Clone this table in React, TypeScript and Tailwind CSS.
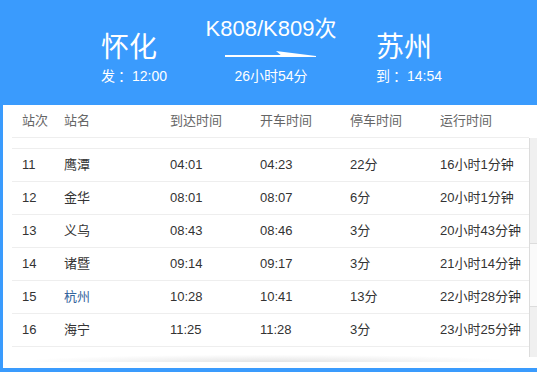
const stops = [
  { no: '11', name: '鹰潭', arrive: '04:01', depart: '04:23', stay: '22分', run: '16小时1分钟' },
  { no: '12', name: '金华', arrive: '08:01', depart: '08:07', stay: '6分', run: '20小时1分钟' },
  { no: '13', name: '义乌', arrive: '08:43', depart: '08:46', stay: '3分', run: '20小时43分钟' },
  { no: '14', name: '诸暨', arrive: '09:14', depart: '09:17', stay: '3分', run: '21小时14分钟' },
  { no: '15', name: '杭州', arrive: '10:28', depart: '10:41', stay: '13分', run: '22小时28分钟', current: true },
  { no: '16', name: '海宁', arrive: '11:25', depart: '11:28', stay: '3分', run: '23小时25分钟' },
];

const cols = 'grid grid-cols-[42px_106px_90px_90px_90px_1fr] pl-[10px] items-center';

function Arrow() {
  return (
    <svg width="92" height="8" viewBox="0 0 92 8" className="block">
      <rect x="0" y="5" width="60" height="2" fill="#fff" />
      <polygon points="51,1 91,6 91,7 58,7" fill="#fff" />
    </svg>
  );
}

export default function App() {
  return (
    <div
      className="w-full h-[372px] border-l-[3px] border-b-4 border-[#3a9bfd] bg-white flex flex-col"
      style={{ fontFamily: '"Liberation Sans", "Noto Sans CJK SC", sans-serif' }}
    >
      {/* Header */}
      <div className="h-[105px] shrink-0 bg-[#3a9bfd] text-white flex pl-[98px]">
        <div className="w-[100px] pt-[34px]">
          <div className="text-[28px] leading-[28px] h-[28px]">怀化</div>
          <div className="mt-[7px] text-[14px] leading-[14px] whitespace-nowrap">
            发<span className="ml-[3px]">：</span>12:00
          </div>
        </div>
        <div className="w-[140px] pt-[18px] flex flex-col items-center">
          <div className="text-[22px] leading-[22px] h-[22px] whitespace-nowrap">K808/K809次</div>
          <div className="mt-[10px]">
            <Arrow />
          </div>
          <div className="mt-[11px] text-[14px] leading-[14px]">26小时54分</div>
        </div>
        <div className="ml-[35px] pt-[34px]">
          <div className="text-[28px] leading-[28px] h-[28px]">苏州</div>
          <div className="mt-[7px] text-[14px] leading-[14px] whitespace-nowrap">
            到<span className="ml-[3px]">：</span>14:54
          </div>
        </div>
      </div>

      {/* Table header */}
      <div className="ml-[9px] mr-[8px] h-[33px] shrink-0 border-b border-[#eeeeee] text-[13px] text-[#666]">
        <div className={`${cols} h-full`}>
          <div>站次</div>
          <div>站名</div>
          <div>到达时间</div>
          <div>开车时间</div>
          <div>停车时间</div>
          <div>运行时间</div>
        </div>
      </div>

      {/* Body */}
      <div className="flex h-[219px] shrink-0">
        <div className="flex-1 ml-[9px] pt-[10px]">
          <div className="border-t border-[#eeeeee]">
            {stops.map((s) => (
              <div
                key={s.no}
                className={`${cols} h-[33px] border-b border-[#eeeeee] text-[13px] text-[#333]`}
              >
                <div>{s.no}</div>
                <div className={s.current ? 'text-[#33649c]' : ''}>{s.name}</div>
                <div>{s.arrive}</div>
                <div>{s.depart}</div>
                <div>{s.stay}</div>
                <div className="whitespace-nowrap">{s.run}</div>
              </div>
            ))}
          </div>
        </div>
        {/* scrollbar */}
        <div className="w-[8px] border-l border-[#dcdcdc] flex flex-col">
          <div className="h-[105px] bg-[#f0f0f0]" />
          <div className="h-[64px] bg-[#fafafa] border-y border-[#dcdcdc]" />
          <div className="flex-1 bg-[#f0f0f0]" />
        </div>
      </div>

      <div className="mx-[30px] mr-[31px] -mt-[2px] h-[7px] bg-[radial-gradient(ellipse_at_bottom,#e4e4e4,rgba(255,255,255,0)_75%)]" />
    </div>
  );
}
